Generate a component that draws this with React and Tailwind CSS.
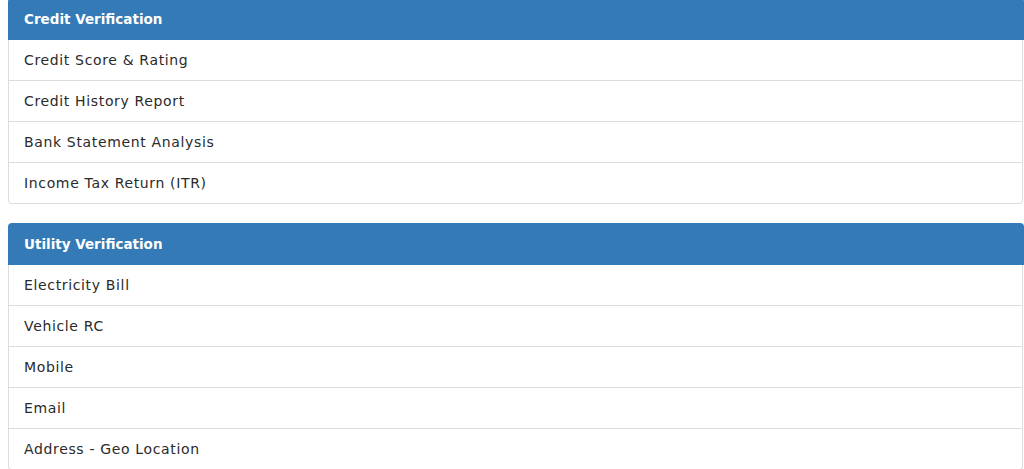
export default function App() {
  const panels = [
    { title: "Credit Verification", items: ["Credit Score & Rating", "Credit History Report", "Bank Statement Analysis", "Income Tax Return (ITR)"] },
    { title: "Utility Verification", items: ["Electricity Bill", "Vehicle RC", "Mobile", "Email", "Address - Geo Location"] },
  ];
  return (
    <div className="bg-white pl-2 -mt-[2px]" style={{ fontFamily: '"DejaVu Sans", sans-serif' }}>
      {panels.map((p) => (
        <div key={p.title} className="mb-[19px]">
          <div className="bg-[#337ab7] rounded-t-[4px] h-[42px] flex items-center px-[16px] text-white text-[13.5px] font-bold">
            {p.title}
          </div>
          <div className="border-x border-b border-[#ddd] rounded-b-[4px] mr-px">
            {p.items.map((it, i) => (
              <div key={it} className={`flex items-center px-[15px] text-[#2a2a2a] text-[14px] tracking-[0.65px] ${i > 0 ? "h-[41px] border-t border-[#ddd]" : "h-[40px]"}`}>
                {it}
              </div>
            ))}
          </div>
        </div>
      ))}
    </div>
  );
}
